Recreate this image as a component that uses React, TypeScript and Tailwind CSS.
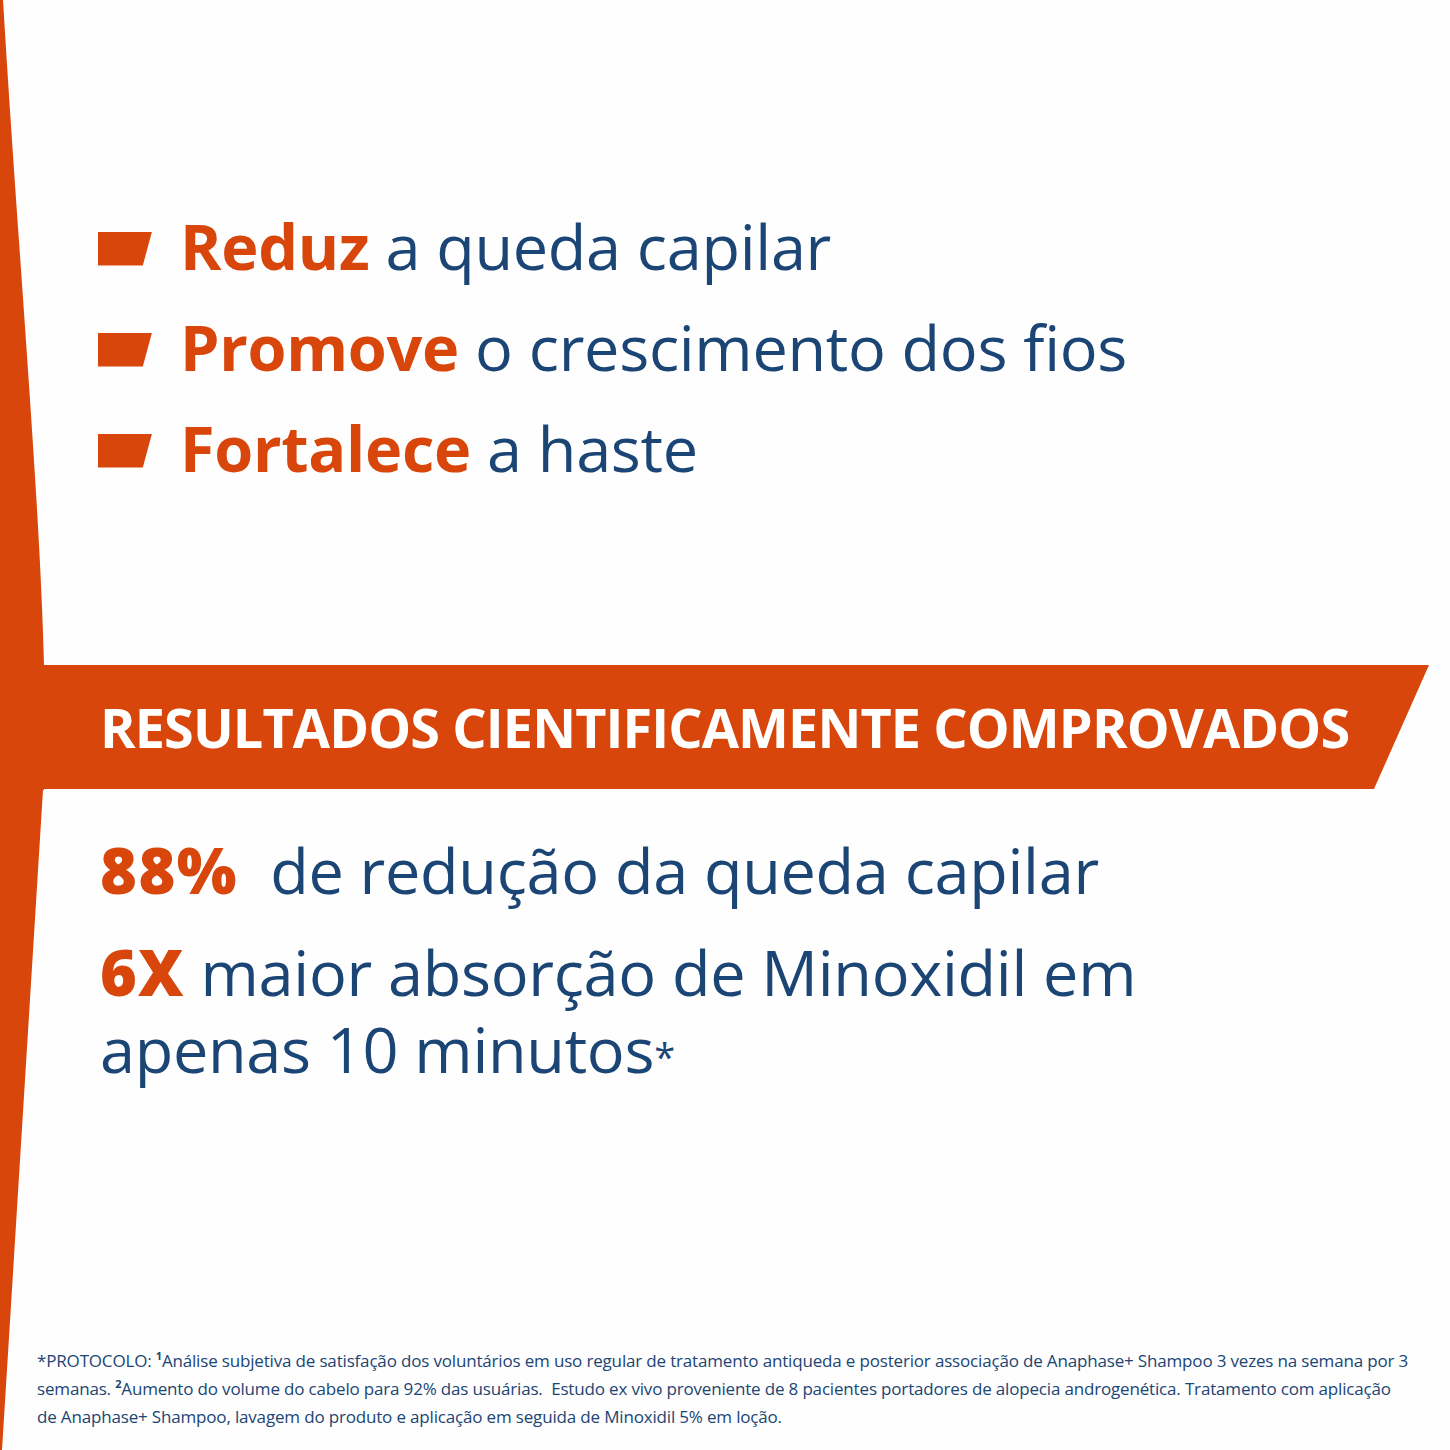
import React from "react";

const ORANGE = "#d8460b";

export default function App() {
  return (
    <div className="relative w-[1450px] h-[1450px] overflow-hidden bg-[#fefefe] text-[#1b4574] [font-family:'Open_Sans',sans-serif]">
      {/* left decorative swoosh */}
      <svg className="absolute left-0 top-0" width="60" height="1450" viewBox="0 0 60 1450">
        <path
          d="M0,0 L3,0 C18,250 40,500 44,665 L44,790 L43,790 L2,1450 L0,1450 Z"
          fill={ORANGE}
        />
      </svg>

      <div className="relative flex flex-col">
        {/* bullet list */}
        <div className="flex flex-col pt-[195px] pl-[98px]">
          {[
            ["Reduz", "a queda capilar"],
            ["Promove", "o crescimento dos fios"],
            ["Fortalece", "a haste"],
          ].map(([b, r]) => (
            <div key={b} className="flex items-center h-[101px]">
              <div className="w-[54px] h-[34px] mt-[6px] bg-[#d8460b] [clip-path:polygon(0_0,100%_0,83%_100%,0_100%)]" />
              <div className="ml-[28px] text-[63px] leading-[101px] whitespace-nowrap tracking-[-0.3px]">
                <span className="font-bold text-[#d8460b]">{b}</span> <span>{r}</span>
              </div>
            </div>
          ))}
        </div>

        {/* banner */}
        <div className="mt-[167px] h-[124px] w-[1429px] bg-[#d8460b] [clip-path:polygon(0_0,100%_0,1374px_100%,0_100%)] flex items-center pl-[100px]">
          <span className="text-white font-bold text-[54px] leading-none whitespace-nowrap tracking-[-0.9px]">
            RESULTADOS CIENTIFICAMENTE COMPROVADOS
          </span>
        </div>

        {/* stats */}
        <div className="pl-[100px] pt-[17px] flex flex-col">
          <div className="text-[63px] leading-[127px] whitespace-nowrap tracking-[-0.3px]">
            <span className="font-extrabold text-[#d8460b] tracking-[1.5px]">88%</span>
            <span>&nbsp;&nbsp;de redução da queda capilar</span>
          </div>
          <div className="text-[63px] leading-[77px] whitespace-nowrap tracking-[-0.3px]">
            <span className="font-extrabold text-[#d8460b] tracking-[1px]">6X</span> maior absorção de Minoxidil em
            <br />
            apenas 10 minutos<span className="text-[38px] align-[2px]">*</span>
          </div>
        </div>

        {/* footnote */}
        <div className="absolute left-[37px] top-[1347px] text-[17px] font-medium leading-[28px] whitespace-nowrap tracking-[-0.17px]">
          <div>
            *PROTOCOLO: <sup className="font-bold text-[11px] top-[-0.6em]">1</sup>Análise subjetiva de satisfação dos voluntários em uso regular de tratamento antiqueda e posterior associação de Anaphase+ Shampoo 3 vezes na semana por 3
          </div>
          <div>
            semanas. <sup className="font-bold text-[11px] top-[-0.6em]">2</sup>Aumento do volume do cabelo para 92% das usuárias.&nbsp; Estudo ex vivo proveniente de 8 pacientes portadores de alopecia androgenética. Tratamento com aplicação
          </div>
          <div>de Anaphase+ Shampoo, lavagem do produto e aplicação em seguida de Minoxidil 5% em loção.</div>
        </div>
      </div>
    </div>
  );
}
